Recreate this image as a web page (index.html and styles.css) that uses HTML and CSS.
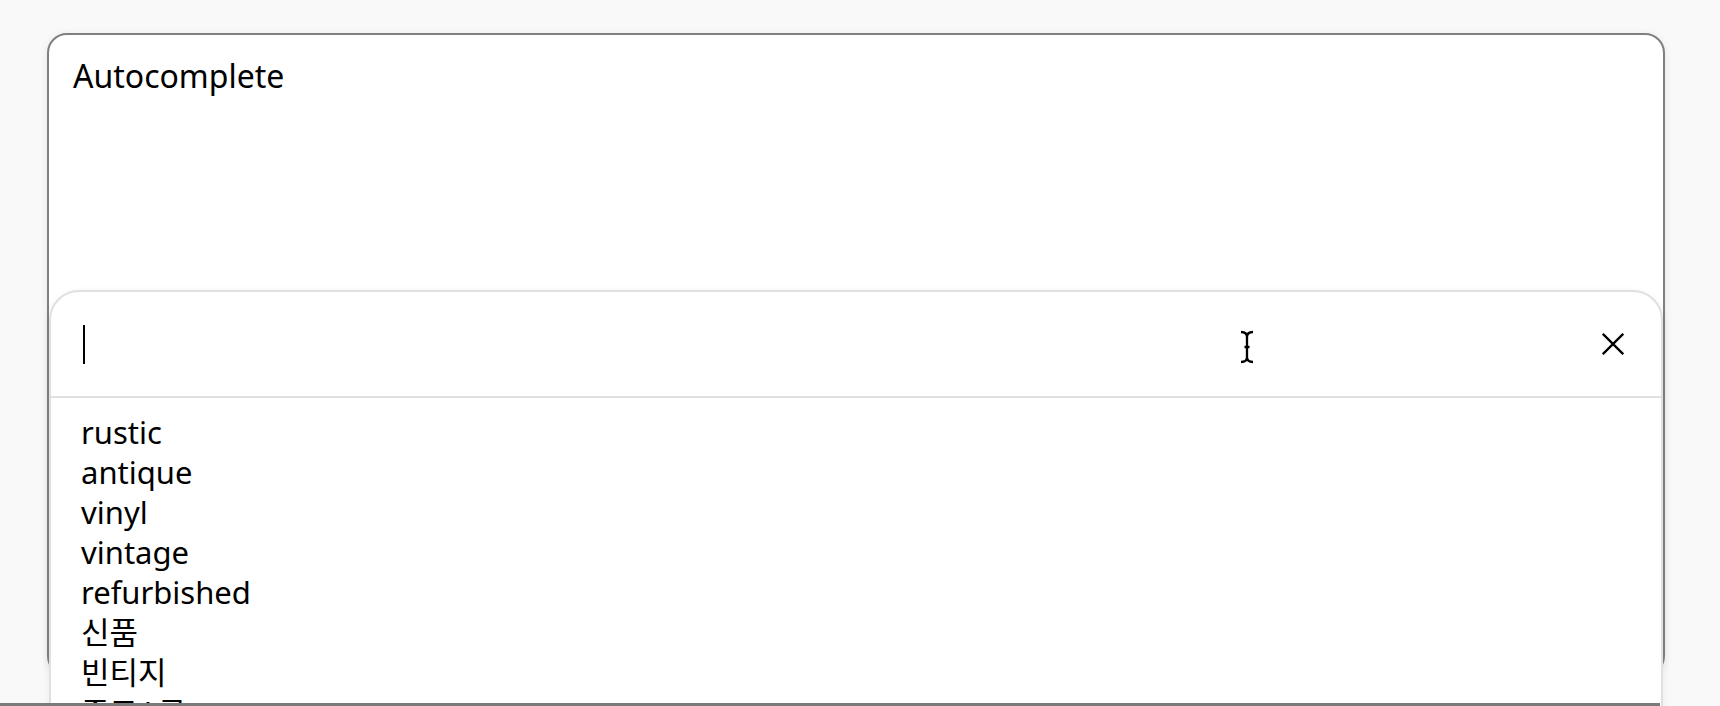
FILE: index.html
```html
<!DOCTYPE html>
<html lang="ko">
    <head>
        <meta charset="UTF-8" />
        <meta name="viewport" content="width=device-width, initial-scale=1.0" />
        <title>Autocomplete</title>
        <link rel="stylesheet" href="styles.css">
    </head>
    <body>
        <div class="card">
            <div class="card-title">Autocomplete</div>

            <div class="popover">
                <div class="search">
                    <span class="caret"></span>
                    <button class="clear" aria-label="닫기">
                        <svg width="22" height="22" viewBox="0 0 22 22">
                            <path d="M0.8 0.8 L21.2 21.2 M21.2 0.8 L0.8 21.2" stroke="#000" stroke-width="2.3" fill="none" />
                        </svg>
                    </button>
                </div>
                <ul class="options">
                    <li>rustic</li>
                    <li>antique</li>
                    <li>vinyl</li>
                    <li>vintage</li>
                    <li>refurbished</li>
                    <li>신품</li>
                    <li>빈티지</li>
                    <li>중고A급</li>
                    <li>중고B급</li>
                </ul>
            </div>
        </div>

        <svg class="pointer" width="16" height="34" viewBox="0 0 16 34">
            <path d="M2 2 Q8 2 8 7 Q8 2 14 2 M8 6 V28 M2 32 Q8 32 8 27 Q8 32 14 32 M5.5 17 H10.5" stroke="#000" stroke-width="2.3" fill="none" />
        </svg>

        <div class="bottom-edge"></div>
    </body>
</html>
```

FILE: styles.css
```css
html, body {
    height: 100%;
}
body {
    margin: 0;
    padding-top: 33px;
    box-sizing: border-box;
    background: #f9f9f9;
    font-family: "Noto Sans", "Noto Sans CJK KR", sans-serif;
    color: #000;
    overflow: hidden;
}
.card {
    position: relative;
    margin-left: 47px;
    width: 1618px;
    height: 643px;
    box-sizing: border-box;
    padding: 19px 24px;
    background: #fff;
    border: 2px solid #808080;
    border-radius: 20px;
    box-shadow: 0 2px 10px rgba(0, 0, 0, 0.08);
}
.card-title {
    font-size: 32px;
}
.popover {
    position: absolute;
    top: 255px;
    left: 0;
    right: 0;
    height: 600px;
    background: #fff;
    border: 2px solid #e0e0e0;
    border-radius: 30px;
    box-shadow: 0 2px 8px rgba(0, 0, 0, 0.06);
}
.search {
    height: 104px;
    display: flex;
    align-items: center;
    justify-content: space-between;
    padding: 0 37px 0 32px;
    border-bottom: 2px solid #e0e0e0;
}
.caret {
    width: 2px;
    height: 39px;
    background: #000;
}
.clear {
    padding: 0;
    border: none;
    background: none;
    display: flex;
    cursor: pointer;
}
.options {
    list-style: none;
    margin: 0;
    padding: 14px 30px;
    font-size: 31px;
    line-height: 40px;
}
.pointer {
    position: absolute;
    left: 1239px;
    top: 330px;
}
.bottom-edge {
    position: fixed;
    left: 0;
    bottom: 0;
    width: 1660px;
    height: 3px;
    background: #7a7a7a;
}
```
